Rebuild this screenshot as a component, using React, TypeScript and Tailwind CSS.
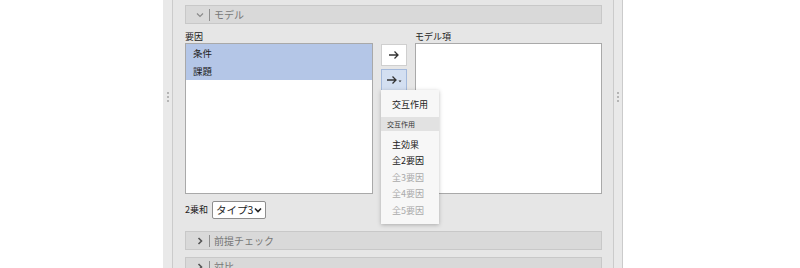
import React from "react";

const font = { fontFamily: '"Noto Sans CJK JP", "Noto Sans", sans-serif' };

const Arrow = ({ dropdown }: { dropdown?: boolean }) => (
  <svg width={dropdown ? 16 : 12} height="10" viewBox={dropdown ? "0 0 16 10" : "0 0 12 10"}>
    <path d="M1 5h9M6.5 1.5L10 5l-3.5 3.5" fill="none" stroke="#333" strokeWidth="1.3" />
    {dropdown && <path d="M12.5 5.5h3l-1.5 1.8z" fill="#333" />}
  </svg>
);

const Dots = () => (
  <div className="flex flex-col items-center gap-[2px] pt-[92px]">
    <span className="h-[2px] w-[2px] bg-[#b5b5b5]" />
    <span className="h-[2px] w-[2px] bg-[#b5b5b5]" />
    <span className="h-[2px] w-[2px] bg-[#b5b5b5]" />
  </div>
);

const Section = ({ title, open }: { title: string; open?: boolean }) => (
  <div className="flex h-[19px] items-center border border-[#c8c8c8] bg-[#d9d9d9] pl-[8px] text-[10px] text-[#777]">
    <span className="flex w-[12px] justify-center">
      {open ? (
        <svg width="8" height="6" viewBox="0 0 8 6">
          <path d="M1 1.5l3 3 3-3" fill="none" stroke="#8a8a8a" strokeWidth="1.2" />
        </svg>
      ) : (
        <svg width="6" height="8" viewBox="0 0 6 8">
          <path d="M1.5 1l3 3-3 3" fill="none" stroke="#555" strokeWidth="1.6" />
        </svg>
      )}
    </span>
    <span className="ml-[3px] mr-[4px] h-[12px] w-px bg-[#8f8f8f]" />
    <span>{title}</span>
  </div>
);

export default function App() {
  const menu = [
    { label: "主効果", on: true },
    { label: "全2要因", on: true },
    { label: "全3要因", on: false },
    { label: "全4要因", on: false },
    { label: "全5要因", on: false },
  ];

  return (
    <div className="flex h-[268px] w-[800px] overflow-hidden bg-white" style={font}>
      <div className="w-[163px]" />
      <div className="w-[10px] border-r border-[#cbcbcb] bg-[#e9e9e9]">
        <Dots />
      </div>
      <div className="w-[440px] bg-[#e6e6e6] pl-[12px] pr-[11px] pt-[5px]">
        <Section title="モデル" open />
        <div className="relative">
          <div className="flex gap-[8px] pt-[6px]">
            <div className="w-[188px]">
              <div className="h-[13px] text-[9px] leading-[13px] text-[#222]">要因</div>
              <div className="h-[151px] border border-[#a9a9a9] bg-white text-[9.5px] text-[#222]">
                <div className="flex h-[18px] items-center bg-[#b4c6e7] pl-[7px]">条件</div>
                <div className="flex h-[18px] items-center bg-[#b4c6e7] pl-[7px]">課題</div>
              </div>
            </div>
            <div className="flex w-[26px] flex-col gap-[3px] pt-[14px]">
              <div className="flex h-[22px] items-center justify-center border border-[#cfcfcf] bg-white">
                <Arrow />
              </div>
              <div className="flex h-[22px] items-center justify-center border border-[#a3b9dc] bg-[#d3dff1]">
                <Arrow dropdown />
              </div>
            </div>
            <div className="w-[187px]">
              <div className="h-[13px] text-[9px] leading-[13px] text-[#222]">モデル項</div>
              <div className="h-[151px] border border-[#a9a9a9] bg-white" />
            </div>
          </div>
          <div className="absolute left-[196px] top-[66px] w-[58px] bg-[#f7f7f7] pb-[5px] pt-[6px] text-[9px] shadow-[0_1px_4px_rgba(0,0,0,0.25)]">
            <div className="flex h-[18px] items-center pl-[11px] text-[#222]">交互作用</div>
            <div className="mt-[3px] flex h-[14px] items-center bg-[#e2e2e2] pl-[6px] text-[7px] text-[#333]">交互作用</div>
            <div className="mt-[5px]">
              {menu.map((m) => (
                <div
                  key={m.label}
                  className={`flex h-[16.5px] items-center pl-[11px] ${m.on ? "text-[#222]" : "text-[#aaaaaa]"}`}
                >
                  {m.label}
                </div>
              ))}
            </div>
          </div>
        </div>
        <div className="mt-[7px] flex h-[18px] items-center gap-[4px] text-[9px] text-[#222]">
          <span>2乗和</span>
          <div className="flex h-[18px] items-center gap-[1px] rounded-[2px] border border-[#8e8e8e] bg-white px-[3px] text-[10.5px]">
            <span>タイプ3</span>
            <svg width="8" height="6" viewBox="0 0 8 6">
              <path d="M1 1.5l3 3 3-3" fill="none" stroke="#222" strokeWidth="1.6" />
            </svg>
          </div>
        </div>
        <div className="mt-[12px]">
          <Section title="前提チェック" />
        </div>
        <div className="mt-[7px]">
          <Section title="対比" />
        </div>
      </div>
      <div className="w-[10px] border-x border-[#cbcbcb] bg-[#e9e9e9]">
        <Dots />
      </div>
    </div>
  );
}
